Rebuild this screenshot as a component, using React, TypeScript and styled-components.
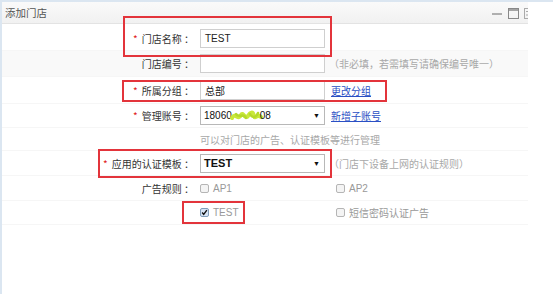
import React from "react";
import styled, { createGlobalStyle } from "styled-components";

const GlobalStyle = createGlobalStyle`
  html, body {
    margin: 0;
    padding: 0;
    background: #ffffff;
  }
  body {
    font-family: "Liberation Sans", "Noto Sans CJK SC", sans-serif;
    font-size: 10px;
    color: #333;
  }
`;

type Row = {
  label?: string;
  required?: boolean;
  h: number;
  striped?: boolean;
  content: React.ReactNode;
};

const App = () => {
  const rows: Row[] = [
    {
      label: "门店名称",
      required: true,
      h: 25,
      content: (
        <Field>
          <TextInput>TEST</TextInput>
        </Field>
      ),
    },
    {
      label: "门店编号",
      h: 26,
      striped: true,
      content: (
        <Field>
          <TextInput />
          <Hint>（非必填，若需填写请确保编号唯一）</Hint>
        </Field>
      ),
    },
    {
      label: "所属分组",
      required: true,
      h: 27,
      content: (
        <Field>
          <TextInput>总部</TextInput>
          <Link>更改分组</Link>
        </Field>
      ),
    },
    {
      label: "管理账号",
      required: true,
      h: 24,
      content: (
        <Field>
          <Select>
            <span>
              18060
              <Scribble width="34" height="14" viewBox="0 0 34 14">
                <path
                  d="M2 9 C5 3 8 12 11 6 C13 2 15 11 18 7 C20 3 23 2 24 7 C25 11 28 4 31 8"
                  fill="none"
                  stroke="#c9e83a"
                  strokeWidth="4"
                  strokeLinecap="round"
                />
                <path
                  d="M6 5 C9 10 13 3 16 9 M20 5 C22 9 26 9 28 4"
                  fill="none"
                  stroke="#b5d92c"
                  strokeWidth="2.5"
                  strokeLinecap="round"
                />
              </Scribble>
              08
            </span>
            <Arrow>▼</Arrow>
          </Select>
          <Link>新增子账号</Link>
        </Field>
      ),
    },
    {
      h: 23,
      content: (
        <Field>
          <Hint $flush>可以对门店的广告、认证模板等进行管理</Hint>
        </Field>
      ),
    },
    {
      label: "应用的认证模板",
      required: true,
      h: 25,
      content: (
        <Field>
          <Select $strong>
            <span>TEST</span>
            <Arrow>▼</Arrow>
          </Select>
          <Hint>（门店下设备上网的认证规则）</Hint>
        </Field>
      ),
    },
    {
      label: "广告规则",
      h: 25,
      content: (
        <Options>
          <Option>
            <Box />
            AP1
          </Option>
          <Option>
            <Box />
            AP2
          </Option>
        </Options>
      ),
    },
    {
      h: 24,
      content: (
        <Options>
          <Option>
            <Box $checked>
              <svg width="9" height="9" viewBox="0 0 9 9">
                <path d="M1.5 4.5 L3.5 7 L7.5 1.5" fill="none" stroke="#111" strokeWidth="1.8" />
              </svg>
            </Box>
            TEST
          </Option>
          <Option>
            <Box />
            短信密码认证广告
          </Option>
        </Options>
      ),
    },
  ];

  return (
    <>
      <GlobalStyle />
      <Page>
        <Panel>
          <TitleBar>
            <Title>添加门店</Title>
            <Tools>
              <svg width="11" height="11" viewBox="0 0 11 11">
                <path d="M0 6 H10" stroke="#888" strokeWidth="1.3" />
              </svg>
              <svg width="11" height="11" viewBox="0 0 11 11">
                <rect x="0.5" y="0.5" width="10" height="10" fill="none" stroke="#888" />
                <path d="M0.5 2 H10.5" stroke="#888" strokeWidth="1.5" />
              </svg>
              <svg width="4" height="11" viewBox="0 0 4 11">
                <rect x="0.5" y="0.5" width="8" height="10" fill="none" stroke="#aaa" />
                <path d="M2 3.5 H4 M2 7 H4" stroke="#aaa" />
              </svg>
            </Tools>
          </TitleBar>
          <Form>
            {rows.map((r, i) => (
              <FormRow key={i} $h={r.h} $striped={r.striped}>
                <Label>
                  {r.label && (
                    <>
                      {r.required && <Star>*</Star>}
                      {r.label} ：
                    </>
                  )}
                </Label>
                {r.content}
              </FormRow>
            ))}
            <Mark style={{ left: 121, top: -8, width: 209, height: 41 }} />
            <Mark style={{ left: 120, top: 56, width: 265, height: 22 }} />
            <Mark style={{ left: 96, top: 125, width: 234, height: 29 }} />
            <Mark style={{ left: 180, top: 177, width: 63, height: 23 }} />
          </Form>
        </Panel>
      </Page>
    </>
  );
};

const Page = styled.div`
  height: 294px;
  box-sizing: border-box;
  border-top: 2px solid #dbe6f1;
  border-left: 2px solid #dbe6f1;
  overflow: hidden;
`;

const Panel = styled.div`
  width: 526px;
  height: 100%;
  background: #fff;
  overflow: hidden;
`;

const TitleBar = styled.div`
  height: 22px;
  box-sizing: border-box;
  display: flex;
  align-items: center;
  padding-left: 3px;
  background: linear-gradient(#fafafa, #f1f1f1);
  border-bottom: 1px solid #e3e3e3;
`;

const Title = styled.div`
  flex: 1;
  font-size: 10.5px;
  color: #555;
  font-family: "Noto Sans CJK SC", sans-serif;
`;

const Tools = styled.div`
  display: flex;
  align-items: center;
  gap: 5px;
  padding-top: 1px;

  svg {
    display: block;
  }
`;

const Form = styled.div`
  position: relative;
  padding-top: 2px;
`;

const FormRow = styled.div<{ $h: number; $striped?: boolean }>`
  height: ${(p) => p.$h}px;
  display: grid;
  grid-template-columns: 192px 1fr;
  column-gap: 6px;
  align-items: center;
  background: ${(p) => (p.$striped ? "#f9f9f9" : "#fff")};
  border-bottom: 1px solid #f6f6f6;
  box-sizing: border-box;
`;

const Label = styled.div`
  text-align: right;
  color: #333;
  font-family: "Noto Sans CJK SC", sans-serif;
  font-size: 10px;
  white-space: nowrap;
`;

const Star = styled.span`
  color: #e02020;
  margin-right: 4px;
`;

const Field = styled.div`
  display: flex;
  align-items: center;
  gap: 6px;
`;

const TextInput = styled.div`
  width: 125px;
  height: 19px;
  box-sizing: border-box;
  border: 1px solid #cfcfcf;
  background: #fff;
  padding-left: 4px;
  display: flex;
  align-items: center;
  font-size: 10px;
  color: #222;
  font-family: "Liberation Sans", "Noto Sans CJK SC", sans-serif;
`;

const Select = styled.div<{ $strong?: boolean }>`
  width: 125px;
  height: 19px;
  box-sizing: border-box;
  border: 1px solid #b8b8b8;
  background: #fff;
  padding: 0 4px 0 3px;
  display: flex;
  align-items: center;
  justify-content: space-between;
  font-size: ${(p) => (p.$strong ? "11px" : "10px")};
  font-weight: ${(p) => (p.$strong ? 700 : 400)};
  color: #111;

  span {
    display: flex;
    align-items: center;
  }
`;

const Scribble = styled.svg`
  margin: 0 -4px 0 -2px;
`;

const Arrow = styled.span`
  font-size: 7px;
  color: #111;
`;

const Link = styled.span`
  color: #2a4fc4;
  text-decoration: underline;
  font-size: 10px;
  font-family: "Noto Sans CJK SC", sans-serif;
`;

const Hint = styled.span<{ $flush?: boolean }>`
  color: #a8a8a8;
  font-size: 10px;
  margin-left: ${(p) => (p.$flush ? "0" : "-2px")};
  font-family: "Noto Sans CJK SC", sans-serif;
  white-space: nowrap;
`;

const Options = styled.div`
  display: grid;
  grid-template-columns: 136px 1fr;
`;

const Option = styled.label`
  display: flex;
  align-items: center;
  gap: 4px;
  color: #999;
  font-size: 10px;
  font-family: "Liberation Sans", "Noto Sans CJK SC", sans-serif;
`;

const Box = styled.span<{ $checked?: boolean }>`
  width: 9px;
  height: 9px;
  box-sizing: border-box;
  border: 1px solid ${(p) => (p.$checked ? "#7f9db9" : "#b5b5b5")};
  border-radius: 2px;
  background: ${(p) => (p.$checked ? "#d6e4f5" : "#f4f4f4")};
  display: flex;
  align-items: center;
  justify-content: center;
`;

const Mark = styled.div`
  position: absolute;
  box-sizing: border-box;
  border: 2px solid #e3343b;
  pointer-events: none;
`;

export default App;
